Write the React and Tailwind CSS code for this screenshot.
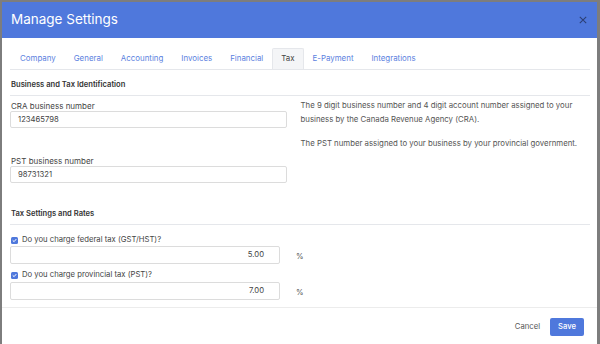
import React from "react";

const tabs = ["Company", "General", "Accounting", "Invoices", "Financial", "Tax", "E-Payment", "Integrations"];

function Check() {
  return (
    <span className="flex h-[7px] w-[7px] items-center justify-center rounded-[1.5px] bg-[#4f78dc]">
      <svg width="5" height="5" viewBox="0 0 10 10" fill="none">
        <path d="M2 5.2 L4.2 7.3 L8 2.8" stroke="white" strokeWidth="2" strokeLinecap="round" strokeLinejoin="round" />
      </svg>
    </span>
  );
}

export default function App() {
  return (
    <div className="h-[344px] w-[600px] overflow-hidden bg-[#7d7d7d] pl-[2px] pt-[2px] font-['Inter',sans-serif]">
      <div className="h-[360px] w-[595px] bg-white">
        <div className="flex h-[36px] items-center justify-between bg-[#4f78dc] pl-[9px] pr-[10px]">
          <span className="text-[13.5px] leading-none text-white">Manage Settings</span>
          <svg width="8" height="8" viewBox="0 0 10 10">
            <path d="M1 1 L9 9 M9 1 L1 9" stroke="#2c3f73" strokeWidth="1.3" />
          </svg>
        </div>
        <div className="pl-[8px] pr-[7px]">
          <div className="mt-[10px] flex border-b border-[#e5e7eb] pl-[1px]">
            {tabs.map((t) => (
              <div
                key={t}
                className={
                  t === "Tax"
                    ? "-mb-px flex h-[21px] items-center rounded-t-[2px] border border-b-0 border-[#e5e7eb] bg-[#f4f5f7] px-[8px] text-[7.9px] text-[#444]"
                    : "flex h-[21px] items-center px-[9px] text-[7.9px] text-[#5b7fe0]"
                }
              >
                {t}
              </div>
            ))}
          </div>

          <div className="mt-[9px] border-b border-[#e5e7eb] pb-[4px] pl-[1px] text-[7.6px] leading-[12px] font-semibold text-[#333]">
            Business and Tax Identification
          </div>

          <div className="mt-[5px] flex">
            <div className="w-[277px]">
              <div className="pl-[1px] text-[8px] leading-[10px] text-[#444]">CRA business number</div>
              <div className="flex h-[17px] items-center rounded-[2px] border border-[#dcdcdc] pl-[7px] text-[7.7px] text-[#444]">
                123465798
              </div>
              <div className="mt-[29px] pl-[1px] text-[8px] leading-[9px] text-[#444]">PST business number</div>
              <div className="flex h-[17px] items-center rounded-[2px] border border-[#dcdcdc] pl-[7px] text-[7.7px] text-[#444]">
                98731321
              </div>
            </div>
            <div className="ml-[14px] w-[290px] text-[7.8px] leading-[14px] text-[#555]">
              <div className="-mt-[3px]">
                The 9 digit business number and 4 digit account number assigned to your business by the Canada Revenue
                Agency (CRA).
              </div>
              <div className="mt-[10px]">The PST number assigned to your business by your provincial government.</div>
            </div>
          </div>

          <div className="mt-[25px] border-b border-[#e5e7eb] pb-[4px] pl-[1px] text-[7.6px] leading-[12px] font-semibold text-[#333]">
            Tax Settings and Rates
          </div>

          <div className="mt-[10px] flex items-center gap-[4px] pl-[1px] text-[7.7px] leading-[10px] text-[#444]">
            <Check />
            Do you charge federal tax (GST/HST)?
          </div>
          <div className="mt-[1px] flex items-center">
            <div className="flex h-[18px] w-[270px] items-center justify-end rounded-[2px] border border-[#dcdcdc] pr-[15px] text-[7.7px] text-[#444]">
              5.00
            </div>
            <span className="ml-[16px] mt-[4px] text-[7.7px] text-[#555]">%</span>
          </div>

          <div className="mt-[6px] flex items-center gap-[4px] pl-[1px] text-[7.7px] leading-[10px] text-[#444]">
            <Check />
            Do you charge provincial tax (PST)?
          </div>
          <div className="mt-[2px] flex items-center">
            <div className="flex h-[18px] w-[270px] items-center justify-end rounded-[2px] border border-[#dcdcdc] pr-[15px] text-[7.7px] text-[#444]">
              7.00
            </div>
            <span className="ml-[16px] mt-[4px] text-[7.7px] text-[#555]">%</span>
          </div>
        </div>

        <div className="mt-[7px] flex items-center justify-end border-t border-[#ececec] pr-[13px] pt-[10px]">
          <span className="mr-[10px] text-[7.7px] text-[#555]">Cancel</span>
          <div className="flex h-[18px] w-[34px] items-center justify-center rounded-[2px] bg-[#4f78dc] text-[7.7px] font-medium text-white">
            Save
          </div>
        </div>
      </div>
    </div>
  );
}
